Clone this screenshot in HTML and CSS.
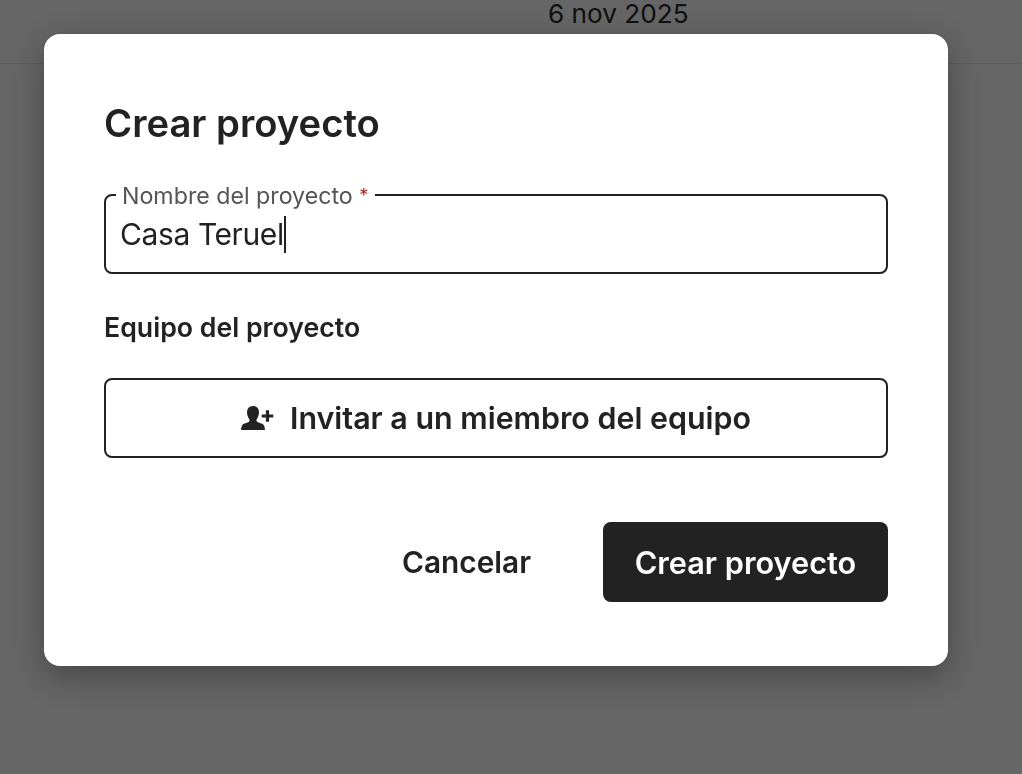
FILE: index.html
```html
<!DOCTYPE html>
<html lang="es">
<head>
  <meta charset="UTF-8" />
  <meta name="viewport" content="width=device-width, initial-scale=1.0" />
  <title>Crear proyecto</title>
  <link rel="stylesheet" href="styles.css">
</head>
<body>
  <header class="topbar">
    <span class="topbar-date">6 nov 2025</span>
  </header>

  <div class="overlay">
    <div class="modal">
      <h1 class="modal-title">Crear proyecto</h1>

      <fieldset class="field">
        <legend class="field-label">Nombre del proyecto <span class="required">*</span></legend>
        <div class="field-value">Casa Teruel<span class="caret"></span></div>
      </fieldset>

      <h2 class="section-title">Equipo del proyecto</h2>

      <button class="invite-button">
        <svg class="invite-icon" viewBox="0 0 33 24" width="33" height="24">
          <path d="M12 0c3.800 0 6 2.600 6 6.300 0 2.700-1 5.300-2.200 6.900-.6.800-.5 1.900.3 2.500 1 .7 2.900 1.200 4.700 1.900 1.800.7 2.900 2.300 3.200 6.400H0c.3-4.100 1.400-5.700 3.200-6.400 1.800-.7 3.700-1.200 4.700-1.900.8-.6.900-1.700.3-2.500C7 11.600 6 9 6 6.300 6 2.600 8.200 0 12 0z" fill="#222"/>
          <path d="M26.500 4.200v11.600M20.700 10h11.600" stroke="#222" stroke-width="3.200" fill="none"/>
        </svg>
        <span>Invitar a un miembro del equipo</span>
      </button>

      <div class="modal-actions">
        <button class="cancel-button">Cancelar</button>
        <button class="primary-button">Crear proyecto</button>
      </div>
    </div>
  </div>
</body>
</html>
```

FILE: styles.css
```css
* {
  box-sizing: border-box;
}

body {
  margin: 0;
  height: 774px;
  overflow: hidden;
  background: #666;
  color: #222;
  font-family: "Inter", "Noto Sans", sans-serif;
}

.topbar {
  height: 64px;
  border-bottom: 1px solid #5c5c5c;
  padding-left: 548px;
}

.topbar-date {
  display: block;
  font-size: 26.200px;
  line-height: 28px;
  color: #111;
}

.overlay {
  position: fixed;
  top: 34px;
  left: 44px;
}

.modal {
  width: 904px;
  height: 632px;
  padding: 64px 60px;
  background: #fff;
  border-radius: 16px;
  box-shadow: 0 10px 32px rgba(0, 0, 0, 0.32);
}

.modal-title {
  margin: 0;
  font-size: 38.200px;
  line-height: 50px;
  font-weight: 600;
}

.field {
  margin: 35px 0 0;
  padding: 0 14px;
  height: 91px;
  border: 2px solid #222;
  border-radius: 8px;
}

.field-label {
  margin-left: -4px;
  padding: 2px 7px 0 6px;
  font-size: 23.200px;
  line-height: 22px;
  color: #555;
}

.required {
  font-size: 18px;
  vertical-align: 2px;
  color: #b3261e;
}

.field-value {
  margin-top: 7px;
  font-size: 30px;
  line-height: 40px;
  letter-spacing: -0.4px;
}

.caret {
  display: inline-block;
  width: 2px;
  height: 37px;
  background: #222;
  vertical-align: -8px;
}

.section-title {
  margin: 35px 0 0;
  font-size: 26.700px;
  line-height: 36px;
  font-weight: 600;
}

button {
  font-family: inherit;
  color: inherit;
  cursor: pointer;
}

.invite-button {
  display: flex;
  align-items: center;
  justify-content: center;
  gap: 16px;
  width: 100%;
  height: 80px;
  margin-top: 33px;
  background: #fff;
  border: 2px solid #222;
  border-radius: 8px;
  font-size: 30.400px;
  font-weight: 600;
}

.modal-actions {
  display: flex;
  justify-content: flex-end;
  align-items: center;
  gap: 36px;
  margin-top: 64px;
}

.cancel-button {
  padding: 0 36px;
  height: 80px;
  background: none;
  border: none;
  font-size: 29.800px;
  font-weight: 600;
}

.primary-button {
  width: 285px;
  height: 80px;
  background: #222;
  color: #fff;
  border: none;
  border-radius: 8px;
  font-size: 30.700px;
  font-weight: 600;
}
```
